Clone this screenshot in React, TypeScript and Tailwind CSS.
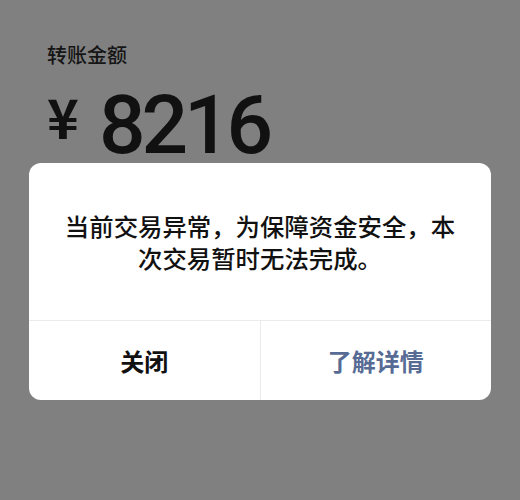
import React from 'react'

const cjk = '"Noto Sans CJK SC", "Noto Sans", sans-serif'

export default function App() {
  return (
    <div
      className="w-[520px] h-[500px] bg-[#808080] overflow-hidden flex flex-col"
      style={{ fontFamily: cjk }}
    >
      {/* Page behind the dialog */}
      <div className="pl-[47px] pt-[42px]">
        <div className="text-[20px] leading-[26px] font-medium text-[#151515]">转账金额</div>
        <div className="flex items-start mt-[16px] h-[68px]">
          <span className="mt-[5px] text-[54px] leading-none font-bold text-[#111]">¥</span>
          <span
            className="ml-[20px] text-[82px] leading-none font-medium text-[#111] tracking-[-0.05em]"
            style={{ fontFamily: 'Roboto, "Noto Sans", sans-serif' }}
          >
            8216
          </span>
        </div>
      </div>

      {/* Dialog */}
      <div className="mx-[29px] mt-[11px] bg-white rounded-[12px] overflow-hidden flex flex-col">
        <div className="h-[157px] px-[34px] flex items-center justify-center">
          <p className="text-[24.4px] leading-[32px] text-center text-[#111] font-medium">
            当前交易异常，为保障资金安全，本次交易暂时无法完成。
          </p>
        </div>
        <div className="h-[80px] flex border-t border-[#ebebeb]">
          <button className="flex-1 flex items-center justify-center text-[24px] font-bold text-[#111]">
            关闭
          </button>
          <div className="w-px bg-[#ebebeb]" />
          <button className="flex-1 flex items-center justify-center text-[24px] font-bold text-[#576b95]">
            了解详情
          </button>
        </div>
      </div>
    </div>
  )
}
